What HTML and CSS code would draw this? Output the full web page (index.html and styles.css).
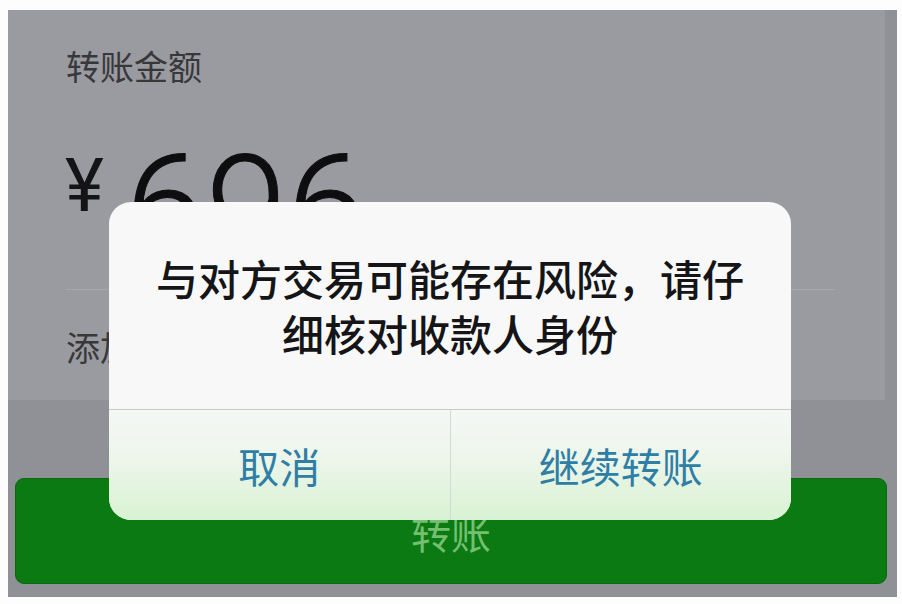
FILE: index.html
```html
<!DOCTYPE html>
<html lang="zh-CN">
<head>
    <meta charset="UTF-8">
    <meta name="viewport" content="width=device-width, initial-scale=1.0">
    <title>转账</title>
    <link rel="stylesheet" href="styles.css">
</head>
<body>

<div class="pantalla">

    <section class="tarjeta">
        <div class="etiqueta">转账金额</div>
        <div class="monto">
            <span class="yen">¥</span>
            <span class="cifra">696</span>
        </div>
        <div class="nota">添加转账说明</div>
    </section>

    <button class="boton-transferir">转账</button>

    <!-- aviso de riesgo encima de todo -->
    <div class="aviso">
        <p class="aviso-texto">与对方交易可能存在风险，请仔细核对收款人身份</p>
        <div class="aviso-botones">
            <button class="aviso-btn">取消</button>
            <button class="aviso-btn">继续转账</button>
        </div>
    </div>

</div>

</body>
</html>
```

FILE: styles.css
```css
body {
    margin: 0;
    padding: 0;
    background-color: #fdfdfd;
    font-family: "Noto Sans CJK SC", "Noto Sans", sans-serif;
}

.pantalla {
    position: relative;
    margin: 10px 0 0 8px;
    width: 889px;
    height: 587px;
    background-color: #909196;
    overflow: hidden;
}

.tarjeta {
    width: 877px;
    height: 390px;
    box-sizing: border-box;
    padding: 32px 50px 0 58px;
    background-color: #9a9ba0;
}

.etiqueta {
    font-size: 34px;
    line-height: 48px;
    color: #38383b;
}

.monto {
    height: 200px;
    box-sizing: border-box;
    padding-top: 47px;
    display: flex;
    align-items: flex-start;
    border-bottom: 1px solid #a6a7ac;
}

.yen {
    font-family: Roboto, "Liberation Sans", sans-serif;
    font-weight: 400;
    font-size: 74px;
    line-height: 1;
    color: #141416;
    margin: 12px 21px 0 -1px;
}

.cifra {
    font-family: Roboto, "Liberation Sans", sans-serif;
    font-weight: 300;
    font-size: 146px;
    line-height: 1;
    color: #0e0e10;
    -webkit-text-stroke: 1px #0e0e10;
}

.nota {
    padding-top: 33px;
    font-size: 34px;
    line-height: 48px;
    color: #38383b;
}

.boton-transferir {
    display: block;
    margin: 78px 0 0 7px;
    width: 872px;
    height: 106px;
    padding: 2px 0 0 0;
    border: 1px solid #086a0d;
    border-radius: 9px;
    background: #0b7a12;
    color: #74bf71;
    font-family: "Noto Sans CJK SC", sans-serif;
    font-size: 40px;
    cursor: pointer;
}

.aviso {
    position: absolute;
    left: 101px;
    top: 192px;
    width: 682px;
    height: 318px;
    border-radius: 22px;
    overflow: hidden;
    background: #f8f8f9;
    display: flex;
    flex-direction: column;
}

.aviso-texto {
    margin: 0;
    height: 208px;
    box-sizing: border-box;
    padding: 48px 44px 0;
    text-align: center;
    font-size: 42px;
    line-height: 55px;
    font-weight: 500;
    color: #151517;
    border-bottom: 1px solid #c9cacc;
}

.aviso-botones {
    flex: 1;
    display: flex;
    background: linear-gradient(#f5f7f5 0%, #eef6ec 40%, #d9f2d3 100%);
}

.aviso-btn {
    flex: 1;
    margin: 0;
    padding: 0;
    border: none;
    background: transparent;
    font-family: "Noto Sans CJK SC", sans-serif;
    font-size: 41px;
    color: #2f7ea6;
    cursor: pointer;
}

.aviso-btn + .aviso-btn {
    border-left: 1px solid #cfdcd2;
}
```
